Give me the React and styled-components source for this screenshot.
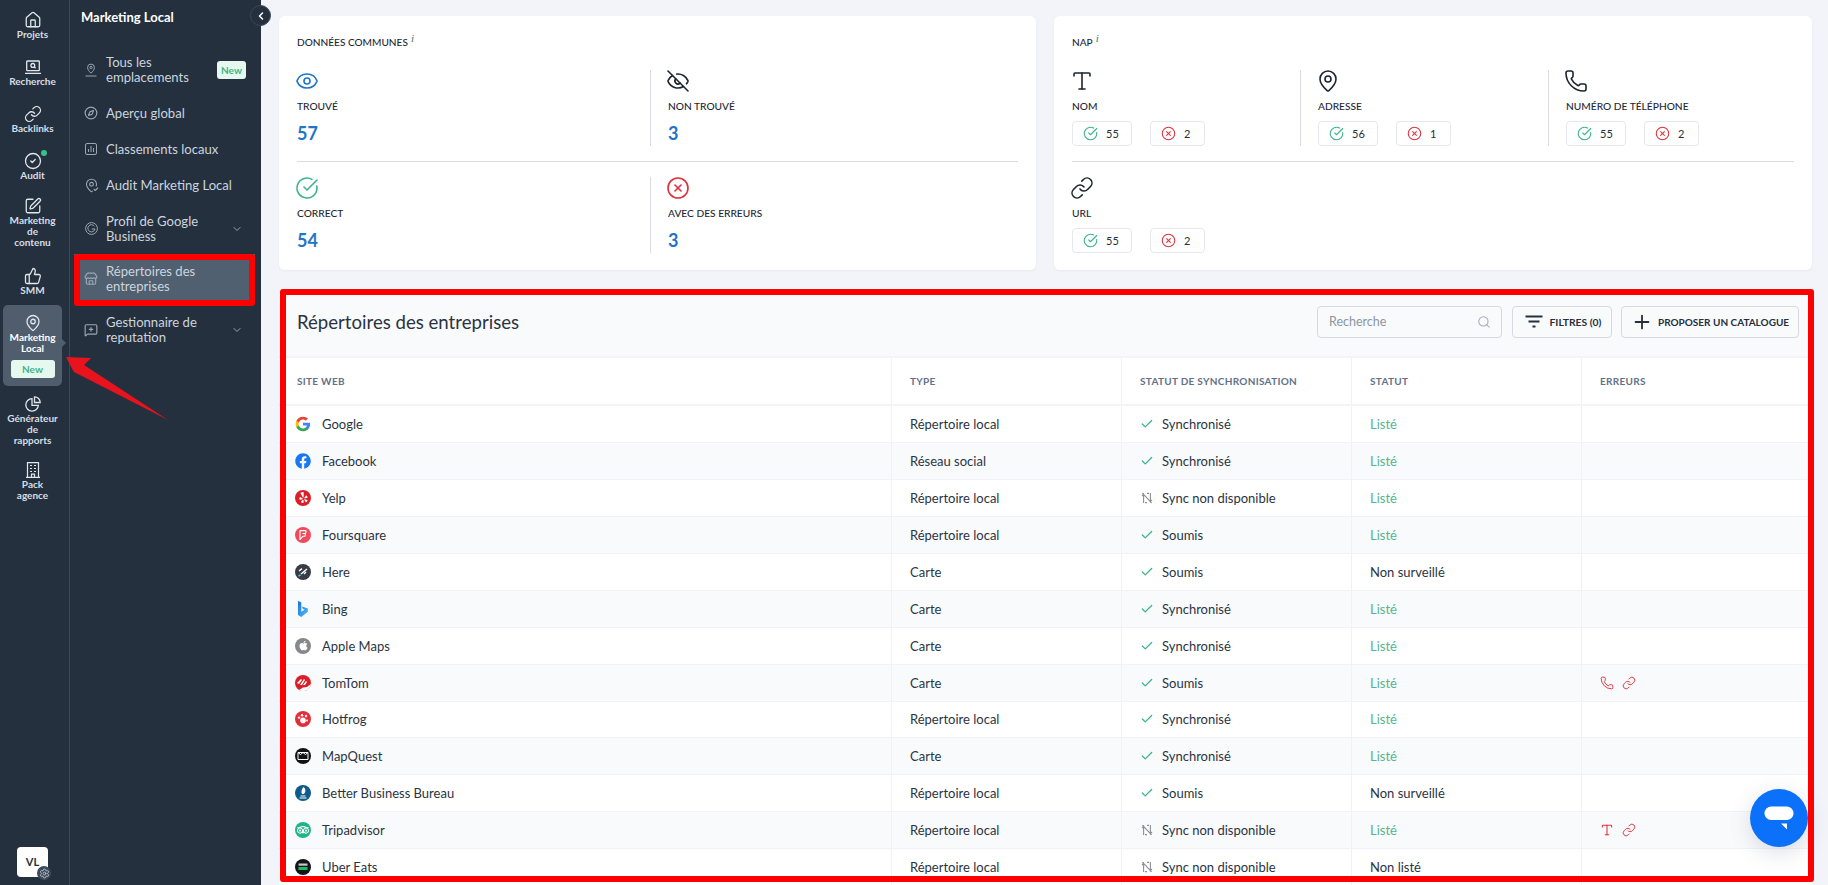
import React from "react";
import styled, { createGlobalStyle } from "styled-components";
import {
  House, Link as LinkIcon, CircleCheck, CircleCheckBig, SquarePen, ThumbsUp, MapPin, Compass, MapPinCheck, Store,
  MessageSquarePlus, ChevronDown, ChevronLeft, Eye, EyeOff, CircleX, Type, Phone, Search, Plus, Check, Settings,
} from "lucide-react";
import { FaFacebook, FaYelp, FaFoursquare, FaApple, FaTripadvisor } from "react-icons/fa";

const GlobalStyle = createGlobalStyle`
  html, body { margin: 0; padding: 0; height: 100%; }
  body { font-family: Lato, "Liberation Sans", sans-serif; background: #f2f4f9; color: #26303d; }
  * { box-sizing: border-box; }
`;

const Page = styled.div`
  position: relative;
  display: grid;
  grid-template-columns: 70px 191px 1fr;
  width: 1828px;
  height: 885px;
  overflow: hidden;
`;

// left icon rail
const Rail = styled.nav`
  background: #25303e;
  border-right: 1px solid #3c4858;
  padding: 12px 0 0 3px;
  display: flex;
  flex-direction: column;
  align-items: flex-start;
  position: relative;
`;

const RailItem = styled.div`
  position: relative;
  width: 59px;
  display: flex;
  flex-direction: column;
  align-items: center;
  text-align: center;
  color: #d6dee6;
  font-size: 10px;
  font-weight: 700;
  line-height: 11px;
  margin-bottom: ${(p) => p.$gap ?? 19}px;
  padding: ${(p) => (p.$active ? "10px 0 8px" : "0")};
  border-radius: 5px;
  background: ${(p) => (p.$active ? "#4f5d6d" : "transparent")};
  ${(p) =>
    p.$active &&
    `color: #fff;
    &::after {
      content: "";
      position: absolute;
      right: -4px;
      top: 34px;
      border-left: 4px solid #4f5d6d;
      border-top: 4px solid transparent;
      border-bottom: 4px solid transparent;
    }`}
`;

const RailIcon = styled.span`
  height: 16px;
  margin-bottom: 1px;
  display: flex;
  align-items: center;
  justify-content: center;
  color: #e0e7ed;
  svg { flex: none; }
`;

const RailDot = styled.span`
  position: absolute;
  top: -3px;
  left: 38px;
  width: 6px;
  height: 6px;
  border-radius: 50%;
  background: #3cc08a;
`;

const RailBadge = styled.span`
  width: 44px;
  height: 18px;
  margin-top: 5.5px;
  border-radius: 3px;
  background: #e5f9ee;
  color: #3fb488;
  font-size: 10px;
  font-weight: 700;
  line-height: 18px;
`;

const Avatar = styled.div`
  position: absolute;
  left: 17px;
  top: 847px;
  width: 31px;
  height: 30px;
  border-radius: 4px;
  background: #fff;
  color: #26303d;
  font-size: 11px;
  font-weight: 700;
  line-height: 30px;
  text-align: center;
`;

const AvatarGear = styled.span`
  position: absolute;
  left: 20px;
  top: 19px;
  width: 14px;
  height: 14px;
  border-radius: 50%;
  background: #3d4a5a;
  color: #cfd7df;
  display: flex;
  align-items: center;
  justify-content: center;
`;

// second level sidebar
const Sidebar = styled.aside`
  position: relative;
  background: #25303e;
  padding-top: 9px;
`;

const SideTitle = styled.div`
  color: #fff;
  font-size: 13px;
  font-weight: 700;
  line-height: 16px;
  padding-left: 11px;
  margin-bottom: 19.5px;
`;

const SideMenu = styled.div`
  display: flex;
  flex-direction: column;
  padding: 0 6px 0 4px;
`;

const SideItem = styled.div`
  display: flex;
  align-items: center;
  min-height: 36px;
  padding: 10.6px 12px 10.6px 11px;
  color: #cbd5df;
  font-size: 13.1px;
  line-height: 14.7px;
  background: ${(p) => (p.$active ? "#516070" : "transparent")};
  svg.chev { flex: none; margin-left: auto; color: #9aa6b3; }
`;

const SideIcon = styled.span`
  flex: none;
  width: 12px;
  margin-right: 9px;
  display: flex;
  justify-content: center;
  color: #9aa6b3;
  svg { flex: none; }
`;

const SideLabel = styled.span`
  flex: 1;
`;

const SideBadge = styled.span`
  flex: none;
  width: 29px;
  height: 18px;
  margin-right: -3px;
  border-radius: 3px;
  background: #e5f9ee;
  color: #3fb488;
  font-size: 10px;
  font-weight: 700;
  line-height: 18px;
  text-align: center;
`;

const Collapse = styled.button`
  position: absolute;
  top: 5px;
  right: -10px;
  width: 21px;
  height: 21px;
  padding: 0;
  border: 1px solid #3c4858;
  border-radius: 50%;
  background: #25303e;
  color: #fff;
  display: flex;
  align-items: center;
  justify-content: center;
  z-index: 2;
`;

// main area
const Main = styled.main`
  padding: 16px 16px 0 18px;
  display: flex;
  flex-direction: column;
  gap: 18px;
  min-width: 0;
`;

const Cards = styled.div`
  display: grid;
  grid-template-columns: 757px 1fr;
  gap: 18px;
`;

const Card = styled.section`
  height: 254px;
  padding: 18px 18px 0;
  background: #fff;
  border-radius: 6px;
  box-shadow: 0 1px 3px rgba(40, 50, 70, 0.05);
`;

const CardTitle = styled.h3`
  margin: 0 0 20px;
  font-size: 10.1px;
  font-weight: 500;
  line-height: 16px;
  color: #1e2733;
  text-transform: uppercase;
  sup {
    font-family: "Liberation Serif", serif;
    font-style: italic;
    font-size: 11px;
    line-height: 0;
    margin-left: 3px;
    color: #5c6774;
    text-transform: none;
  }
`;

const StatRow = styled.div`
  display: grid;
  grid-template-columns: ${(p) => p.$cols};
  height: 76px;
`;

const Divider = styled.hr`
  margin: 15px 0;
  border: 0;
  border-top: 1px solid #d9dce5;
`;

const Stat = styled.div`
  display: flex;
  flex-direction: column;
  align-items: flex-start;
  ${(p) => p.$split && `border-left: 1px solid #d9dce5; padding-left: ${p.$split}px;`}
`;

const StatIcon = styled.span`
  height: 22px;
  margin-left: -2px;
  display: flex;
  align-items: center;
  color: ${(p) => p.$tone || "#1d2530"};
  svg { flex: none; }
`;

const StatLabel = styled.div`
  margin-top: 7px;
  font-size: 10.2px;
  font-weight: 500;
  line-height: 14px;
  color: #1e2733;
  text-transform: uppercase;
`;

const StatValue = styled.div`
  margin-top: 8px;
  font-size: 18px;
  font-weight: 700;
  line-height: 24px;
  color: #1f75c9;
`;

const Chips = styled.div`
  display: flex;
  gap: 18px;
  margin-top: 8px;
`;

const Chip = styled.div`
  display: flex;
  align-items: center;
  gap: 8px;
  width: ${(p) => p.$w}px;
  height: 25px;
  padding-left: 10px;
  border: 1px solid #e6e8ee;
  border-radius: 4px;
  font-size: 11px;
  color: #26303d;
  svg { color: ${(p) => p.$tone}; flex: none; }
`;

// table panel
const Panel = styled.section`
  position: relative;
  flex: 1;
  background: #fff;
  border-radius: 6px 6px 0 0;
`;

const PanelHead = styled.header`
  height: 70px;
  padding: 0 13px 1px 18px;
  display: flex;
  align-items: center;
  gap: 9.5px;
  background: #f9fafc;
  border-bottom: 2px solid #f2f4f9;
  border-radius: 6px 6px 0 0;
`;

const PanelTitle = styled.h2`
  margin: 0 auto 0 0;
  font-size: 18.6px;
  font-weight: 400;
  color: #2a3340;
`;

const SearchBox = styled.label`
  width: 185px;
  height: 32px;
  padding: 0 10px 0 11px;
  display: flex;
  align-items: center;
  background: #f9fafc;
  border: 1px solid #d5d9e2;
  border-radius: 4px;
  color: #a3adb8;
`;

const SearchInput = styled.input`
  flex: 1;
  min-width: 0;
  border: 0;
  padding: 0;
  outline: 0;
  background: transparent;
  font: 400 12.5px Lato, sans-serif;
  &::placeholder { color: #8b96a3; opacity: 1; }
`;

const ToolButton = styled.button`
  width: ${(p) => p.$w}px;
  height: 32px;
  padding: 0 0 0 ${(p) => p.$pad}px;
  display: flex;
  align-items: center;
  gap: ${(p) => p.$gap}px;
  background: #f9fafc;
  border: 1px solid #d5d9e2;
  border-radius: 4px;
  font: 700 ${(p) => p.$size}px Lato, sans-serif;
  color: #26303d;
  text-transform: uppercase;
  white-space: nowrap;
`;

const GRID = "612px 230px 230px 230px 1fr";

const HeadRow = styled.div`
  display: grid;
  grid-template-columns: ${GRID};
  height: 48px;
  border-bottom: 2px solid #f2f4f9;
`;

const HeadCell = styled.div`
  display: flex;
  align-items: center;
  padding-left: 18px;
  ${(p) => !p.$first && "border-left: 1px solid #f0f2f7;"}
  font-size: 10px;
  font-weight: 700;
  letter-spacing: 0.3px;
  color: #62718a;
  text-transform: uppercase;
`;

const Row = styled.div`
  display: grid;
  grid-template-columns: ${GRID};
  height: 36.94px;
  background: ${(p) => (p.$odd ? "#f9fafc" : "#fff")};
  border-bottom: 1px solid #f0f2f7;
`;

const Cell = styled.div`
  display: flex;
  align-items: center;
  gap: ${(p) => p.$gap ?? 0}px;
  padding-left: 18px;
  ${(p) => !p.$first && "border-left: 1px solid #f0f2f7;"}
  font-size: 13px;
  color: ${(p) => p.$tone || "#2b3441"};
`;

const SiteCell = styled(Cell)`
  padding-left: 16px;
  gap: 11px;
`;

const LogoDisc = styled.span`
  flex: none;
  width: 16px;
  height: 16px;
  border-radius: 50%;
  background: ${(p) => p.$bg || "transparent"};
  color: #fff;
  display: flex;
  align-items: center;
  justify-content: center;
`;

const SyncSlot = styled.span`
  flex: none;
  width: 14px;
  display: flex;
  justify-content: center;
  color: ${(p) => (p.$off ? "#8a8f96" : "#3cb48a")};
`;

// annotation overlays
const RedFrame = styled.div`
  position: absolute;
  border: 6px solid #ff0000;
  border-radius: 3px;
  pointer-events: none;
  z-index: 3;
`;

const SideFrame = styled(RedFrame)`
  left: 74px;
  top: 254px;
  width: 181px;
  height: 52px;
`;

const PanelFrame = styled(RedFrame)`
  left: 1px;
  top: 1px;
  right: -2px;
  height: 593px;
`;

const ArrowMark = styled.svg`
  position: absolute;
  left: 60px;
  top: 350px;
  z-index: 3;
`;

const ChatButton = styled.div`
  position: absolute;
  left: 1750px;
  top: 789px;
  width: 58px;
  height: 58px;
  border-radius: 50%;
  background: #0b70fa;
  box-shadow: 0 6px 22px rgba(60, 80, 110, 0.18);
  display: flex;
  align-items: center;
  justify-content: center;
  z-index: 2;
`;

const LaptopSearch = () => (
  <svg width="16" height="15" viewBox="0 0 16 15" fill="none" stroke="currentColor" strokeWidth="1.3">
    <rect x="1.7" y="1" width="12.6" height="9.6" rx="0.6" />
    <circle cx="7.8" cy="5.4" r="1.9" />
    <path d="M9.2 6.8l1.4 1.4M0 13.4h16" />
  </svg>
);

const PieIcon = () => (
  <svg width="16" height="16" viewBox="0 0 16 16" fill="none" stroke="currentColor" strokeWidth="1.3">
    <path d="M7 2.6a6.3 6.3 0 1 0 6.4 6.7H7z" />
    <path d="M9.5 0.8a5.6 5.6 0 0 1 5.7 5.7H9.5z" />
  </svg>
);

const BuildingIcon = () => (
  <svg width="14" height="16" viewBox="0 0 14 16" fill="none" stroke="currentColor" strokeWidth="1.2">
    <path d="M1.500 15.400V0.700h11v14.700M0 15.400h14" />
    <path d="M5.500 15.400v-3.200h3v3.200M4 3.500h2M8 3.500h2M4 6.500h2M8 6.500h2M4 9.500h2M8 9.500h2" />
  </svg>
);

const PinBase = () => (
  <svg width="12" height="14" viewBox="0 0 12 14" fill="none" stroke="currentColor" strokeWidth="1">
    <path d="M6 10.200C4 8.200 2.600 6.600 2.600 4.500a3.400 3.400 0 0 1 6.800 0c0 2.100-1.400 3.700-3.400 5.700z" />
    <circle cx="6" cy="4.500" r="1.100" />
    <path d="M0.500 13h11" />
  </svg>
);

const BarsBox = () => (
  <svg width="12" height="12" viewBox="0 0 12 12" fill="none" stroke="currentColor" strokeWidth="1">
    <rect x="0.500" y="0.500" width="11" height="11" rx="1.500" />
    <path d="M3.500 9V6M6 9V3M8.500 9V5" />
  </svg>
);

const GoogleRing = () => (
  <svg width="13" height="13" viewBox="0 0 13 13" fill="none" stroke="currentColor" strokeWidth="1">
    <circle cx="6.500" cy="6.500" r="5.900" />
    <path d="M9.400 4.200A3.600 3.600 0 1 0 10 7H6.800" />
  </svg>
);

const FilterLines = () => (
  <svg width="18" height="14" viewBox="0 0 18 14" stroke="#26303d" strokeWidth="1.8">
    <path d="M0.500 1.500h17M3.500 6.500h11M7.500 11.500h3" />
  </svg>
);

const SyncOff = () => (
  <svg width="12" height="12" viewBox="0 0 12 12" fill="none" stroke="currentColor" strokeWidth="1.100">
    <path d="M2.600 11V2.400L1 4M9.400 1v8.600L11 8M1.400 1.200l9.200 9.600M6 1.400h2M4 10.600h2" />
  </svg>
);

const ChatGlyph = () => (
  <svg width="30" height="24" viewBox="0 0 30 24" fill="#fff">
    <rect x="0.500" y="0.500" width="29" height="13.500" rx="6.750" />
    <path d="M17 17.500h6v6z" />
  </svg>
);

const LOGOS = {
  Google: (
    <svg width="16" height="16" viewBox="0 0 24 24">
      <path fill="#4285F4" d="M22.56 12.25c0-.78-.07-1.53-.2-2.25H12v4.26h5.92c-.26 1.37-1.04 2.53-2.21 3.31v2.77h3.57c2.08-1.92 3.28-4.74 3.28-8.09z" />
      <path fill="#34A853" d="M12 23c2.97 0 5.46-.98 7.28-2.66l-3.57-2.77c-.98.66-2.23 1.06-3.71 1.06-2.86 0-5.29-1.93-6.16-4.53H2.18v2.84C3.99 20.53 7.7 23 12 23z" />
      <path fill="#FBBC05" d="M5.84 14.09c-.22-.66-.35-1.36-.35-2.09s.13-1.43.35-2.09V7.07H2.18C1.43 8.55 1 10.22 1 12s.43 3.45 1.18 4.93l2.85-2.22.81-.62z" />
      <path fill="#EA4335" d="M12 5.38c1.62 0 3.06.56 4.21 1.64l3.15-3.15C17.45 2.09 14.97 1 12 1 7.7 1 3.99 3.47 2.18 7.07l3.66 2.84c.87-2.6 3.3-4.53 6.16-4.53z" />
    </svg>
  ),
  Facebook: <FaFacebook size={16} color="#1877f2" />,
  Yelp: <LogoDisc $bg="#d9202a"><FaYelp size={11} /></LogoDisc>,
  Foursquare: <LogoDisc $bg="#ef4b5a"><FaFoursquare size={10} /></LogoDisc>,
  Here: (
    <LogoDisc $bg="#383c47">
      <svg width="12" height="12" viewBox="0 0 12 12" fill="none" stroke="#fff" strokeWidth="1.400">
        <path d="M2 5l3-2.400M4 8l6-5M7 8l2-2" />
        <path d="M1.500 10l2-1" stroke="#4fd0c0" />
      </svg>
    </LogoDisc>
  ),
  Bing: (
    <svg width="16" height="16" viewBox="0 0 16 16">
      <defs>
        <linearGradient id="bingFill" x1="0" y1="0" x2="1" y2="1">
          <stop offset="0" stopColor="#1b6fe0" />
          <stop offset="1" stopColor="#4cc2f5" />
        </linearGradient>
      </defs>
      <path fill="url(#bingFill)" d="M3 0l3.300 1.200v9.600l3.400-2-1.800-.8-1-2.600 6 2v3.300L6.300 16 3 14z" />
    </svg>
  ),
  "Apple Maps": <LogoDisc $bg="#86888d"><FaApple size={11} /></LogoDisc>,
  TomTom: (
    <LogoDisc $bg="#d9202a">
      <svg width="16" height="16" viewBox="0 0 16 16">
        <path fill="#fff" d="M15.900 9A8 8 0 0 1 4 15l4-2.500 4-.5zM2 8l4-4 1 1-3 4zM5 10l4-6 1 1-3 5zM8 10l3-4 1 1-2 3z" />
      </svg>
    </LogoDisc>
  ),
  Hotfrog: (
    <LogoDisc $bg="#e52d3a">
      <svg width="12" height="12" viewBox="0 0 12 12" fill="#fff">
        <circle cx="6" cy="7.400" r="2.800" />
        <circle cx="2" cy="4.600" r="1.200" />
        <circle cx="5" cy="2.200" r="1.200" />
        <circle cx="9" cy="3" r="1.200" />
        <circle cx="10" cy="7.500" r="1" />
      </svg>
    </LogoDisc>
  ),
  MapQuest: (
    <LogoDisc $bg="#111417">
      <svg width="12" height="10" viewBox="0 0 12 10" fill="none" stroke="#fff" strokeWidth="1">
        <path d="M1 1.500h10v7H1zM1 1.500l2.500 2 2.500-2 2.500 2 2.500-2" />
      </svg>
    </LogoDisc>
  ),
  "Better Business Bureau": (
    <LogoDisc $bg="#0f5c8c">
      <svg width="10" height="12" viewBox="0 0 10 12" fill="#fff">
        <path d="M5.500 0C8 2 8 4.500 6 7H4C2.800 5 3.500 2.500 5.500 0zM2.500 8.500h5v1h-5zM1.500 10.500h7v1h-7z" />
      </svg>
    </LogoDisc>
  ),
  Tripadvisor: <LogoDisc $bg="#21b489"><FaTripadvisor size={12} /></LogoDisc>,
  "Uber Eats": (
    <LogoDisc $bg="#12161a">
      <svg width="12" height="10" viewBox="0 0 12 10">
        <rect x="1.500" y="1.500" width="9" height="2.200" fill="#c8c8c8" />
        <rect x="1.500" y="5" width="9" height="3" fill="#16c062" />
      </svg>
    </LogoDisc>
  ),
};

const RAIL_STROKE = { size: 18, strokeWidth: 1.7 };

const RAIL = [
  { icon: <House {...RAIL_STROKE} />, lines: ["Projets"] },
  { icon: <LaptopSearch />, lines: ["Recherche"] },
  { icon: <LinkIcon {...RAIL_STROKE} />, lines: ["Backlinks"] },
  { icon: <CircleCheck {...RAIL_STROKE} />, lines: ["Audit"], dot: true, gap: 17 },
  { icon: <SquarePen {...RAIL_STROKE} />, lines: ["Marketing", "de", "contenu"], gap: 20 },
  { icon: <ThumbsUp {...RAIL_STROKE} />, lines: ["SMM"], gap: 9 },
  { icon: <MapPin {...RAIL_STROKE} />, lines: ["Marketing", "Local"], active: true, badge: "New", gap: 10 },
  { icon: <PieIcon />, lines: ["Générateur", "de", "rapports"], gap: 16 },
  { icon: <BuildingIcon />, lines: ["Pack", "agence"] },
];

const ROWS = [
  ["Google", "Répertoire local", "Synchronisé", "Listé"],
  ["Facebook", "Réseau social", "Synchronisé", "Listé"],
  ["Yelp", "Répertoire local", "Sync non disponible", "Listé"],
  ["Foursquare", "Répertoire local", "Soumis", "Listé"],
  ["Here", "Carte", "Soumis", "Non surveillé"],
  ["Bing", "Carte", "Synchronisé", "Listé"],
  ["Apple Maps", "Carte", "Synchronisé", "Listé"],
  ["TomTom", "Carte", "Soumis", "Listé", ["phone", "link"]],
  ["Hotfrog", "Répertoire local", "Synchronisé", "Listé"],
  ["MapQuest", "Carte", "Synchronisé", "Listé"],
  ["Better Business Bureau", "Répertoire local", "Soumis", "Non surveillé"],
  ["Tripadvisor", "Répertoire local", "Sync non disponible", "Listé", ["type", "link"]],
  ["Uber Eats", "Répertoire local", "Sync non disponible", "Non listé"],
];

const ERROR_ICONS = {
  phone: <Phone size={14} strokeWidth={1.6} />,
  link: <LinkIcon size={14} strokeWidth={1.6} />,
  type: <Type size={14} strokeWidth={1.8} />,
};

const CountChips = ({ ok, ko }) => (
  <Chips>
    <Chip $w={60} $tone="#3cb48a"><CircleCheckBig size={15} strokeWidth={1.7} />{ok}</Chip>
    <Chip $w={55} $tone="#e0303a"><CircleX size={15} strokeWidth={1.7} />{ko}</Chip>
  </Chips>
);

const STAT_ICON = { size: 24, strokeWidth: 1.6 };

export default function App() {
  return (
    <Page>
      <GlobalStyle />
      <Rail>
        {RAIL.map((item) => (
          <RailItem key={item.lines[0] + item.lines.length} $active={item.active} $gap={item.gap}>
            {item.dot && <RailDot />}
            <RailIcon>{item.icon}</RailIcon>
            {item.lines.map((line) => (
              <span key={line}>{line}</span>
            ))}
            {item.badge && <RailBadge>{item.badge}</RailBadge>}
          </RailItem>
        ))}
        <Avatar>
          VL
          <AvatarGear><Settings size={11} strokeWidth={1.6} /></AvatarGear>
        </Avatar>
      </Rail>

      <Sidebar>
        <SideTitle>Marketing Local</SideTitle>
        <Collapse><ChevronLeft size={12} strokeWidth={3} /></Collapse>
        <SideMenu>
          <SideItem><SideIcon><PinBase /></SideIcon><SideLabel>Tous les emplacements</SideLabel><SideBadge>New</SideBadge></SideItem>
          <SideItem><SideIcon><Compass size={14} /></SideIcon><SideLabel>Aperçu global</SideLabel></SideItem>
          <SideItem><SideIcon><BarsBox /></SideIcon><SideLabel>Classements locaux</SideLabel></SideItem>
          <SideItem><SideIcon><MapPinCheck size={15} strokeWidth={1.7} /></SideIcon><SideLabel>Audit Marketing Local</SideLabel></SideItem>
          <SideItem><SideIcon><GoogleRing /></SideIcon><SideLabel>Profil de Google Business</SideLabel><ChevronDown className="chev" size={12} /></SideItem>
          <SideItem $active><SideIcon><Store size={14} /></SideIcon><SideLabel>Répertoires des entreprises</SideLabel></SideItem>
          <SideItem><SideIcon><MessageSquarePlus size={14} /></SideIcon><SideLabel>Gestionnaire de reputation</SideLabel><ChevronDown className="chev" size={12} /></SideItem>
        </SideMenu>
      </Sidebar>

      <Main>
        <Cards>
          <Card>
            <CardTitle>Données communes<sup>i</sup></CardTitle>
            <StatRow $cols="353px 1fr">
              <Stat>
                <StatIcon $tone="#1f75c9"><Eye {...STAT_ICON} /></StatIcon>
                <StatLabel>Trouvé</StatLabel>
                <StatValue>57</StatValue>
              </Stat>
              <Stat $split={17}>
                <StatIcon><EyeOff {...STAT_ICON} /></StatIcon>
                <StatLabel>Non trouvé</StatLabel>
                <StatValue>3</StatValue>
              </Stat>
            </StatRow>
            <Divider />
            <StatRow $cols="353px 1fr">
              <Stat>
                <StatIcon $tone="#3cb48a"><CircleCheckBig {...STAT_ICON} /></StatIcon>
                <StatLabel>Correct</StatLabel>
                <StatValue>54</StatValue>
              </Stat>
              <Stat $split={17}>
                <StatIcon $tone="#e0303a"><CircleX {...STAT_ICON} /></StatIcon>
                <StatLabel>Avec des erreurs</StatLabel>
                <StatValue>3</StatValue>
              </Stat>
            </StatRow>
          </Card>

          <Card>
            <CardTitle>NAP<sup>i</sup></CardTitle>
            <StatRow $cols="228px 248px 1fr">
              <Stat>
                <StatIcon><Type {...STAT_ICON} /></StatIcon>
                <StatLabel>Nom</StatLabel>
                <CountChips ok={55} ko={2} />
              </Stat>
              <Stat $split={17}>
                <StatIcon><MapPin {...STAT_ICON} /></StatIcon>
                <StatLabel>Adresse</StatLabel>
                <CountChips ok={56} ko={1} />
              </Stat>
              <Stat $split={17}>
                <StatIcon><Phone {...STAT_ICON} /></StatIcon>
                <StatLabel>Numéro de téléphone</StatLabel>
                <CountChips ok={55} ko={2} />
              </Stat>
            </StatRow>
            <Divider />
            <StatRow $cols="1fr">
              <Stat>
                <StatIcon><LinkIcon {...STAT_ICON} /></StatIcon>
                <StatLabel>URL</StatLabel>
                <CountChips ok={55} ko={2} />
              </Stat>
            </StatRow>
          </Card>
        </Cards>

        <Panel>
          <PanelFrame />
          <PanelHead>
            <PanelTitle>Répertoires des entreprises</PanelTitle>
            <SearchBox>
              <SearchInput placeholder="Recherche" />
              <Search size={14} strokeWidth={1.8} />
            </SearchBox>
            <ToolButton $w={100} $pad={12} $gap={7} $size={10.3}><FilterLines />Filtres (0)</ToolButton>
            <ToolButton $w={178} $pad={9} $gap={5} $size={10}><Plus size={22} strokeWidth={2} color="#26303d" />Proposer un catalogue</ToolButton>
          </PanelHead>
          <HeadRow>
            <HeadCell $first>Site web</HeadCell>
            <HeadCell>Type</HeadCell>
            <HeadCell>Statut de synchronisation</HeadCell>
            <HeadCell>Statut</HeadCell>
            <HeadCell>Erreurs</HeadCell>
          </HeadRow>
          {ROWS.map(([name, type, sync, status, errors], i) => (
            <Row key={name} $odd={i % 2 === 1}>
              <SiteCell $first>{LOGOS[name]}{name}</SiteCell>
              <Cell>{type}</Cell>
              <Cell $gap={8}>
                <SyncSlot $off={sync.startsWith("Sync non")}>
                  {sync.startsWith("Sync non") ? <SyncOff /> : <Check size={14} strokeWidth={2.2} />}
                </SyncSlot>
                {sync}
              </Cell>
              <Cell $tone={status === "Listé" ? "#55b58c" : undefined}>{status}</Cell>
              <Cell $gap={8} $tone="#e0303a">
                {errors && errors.map((e) => <React.Fragment key={e}>{ERROR_ICONS[e]}</React.Fragment>)}
              </Cell>
            </Row>
          ))}
        </Panel>
      </Main>

      <SideFrame />
      <ArrowMark width="115" height="75" viewBox="60 350 115 75">
        <polygon points="66,357 91,358 84,365 168,420 74,372 78,380" fill="#e8131c" />
      </ArrowMark>
      <ChatButton><ChatGlyph /></ChatButton>
    </Page>
  );
}
